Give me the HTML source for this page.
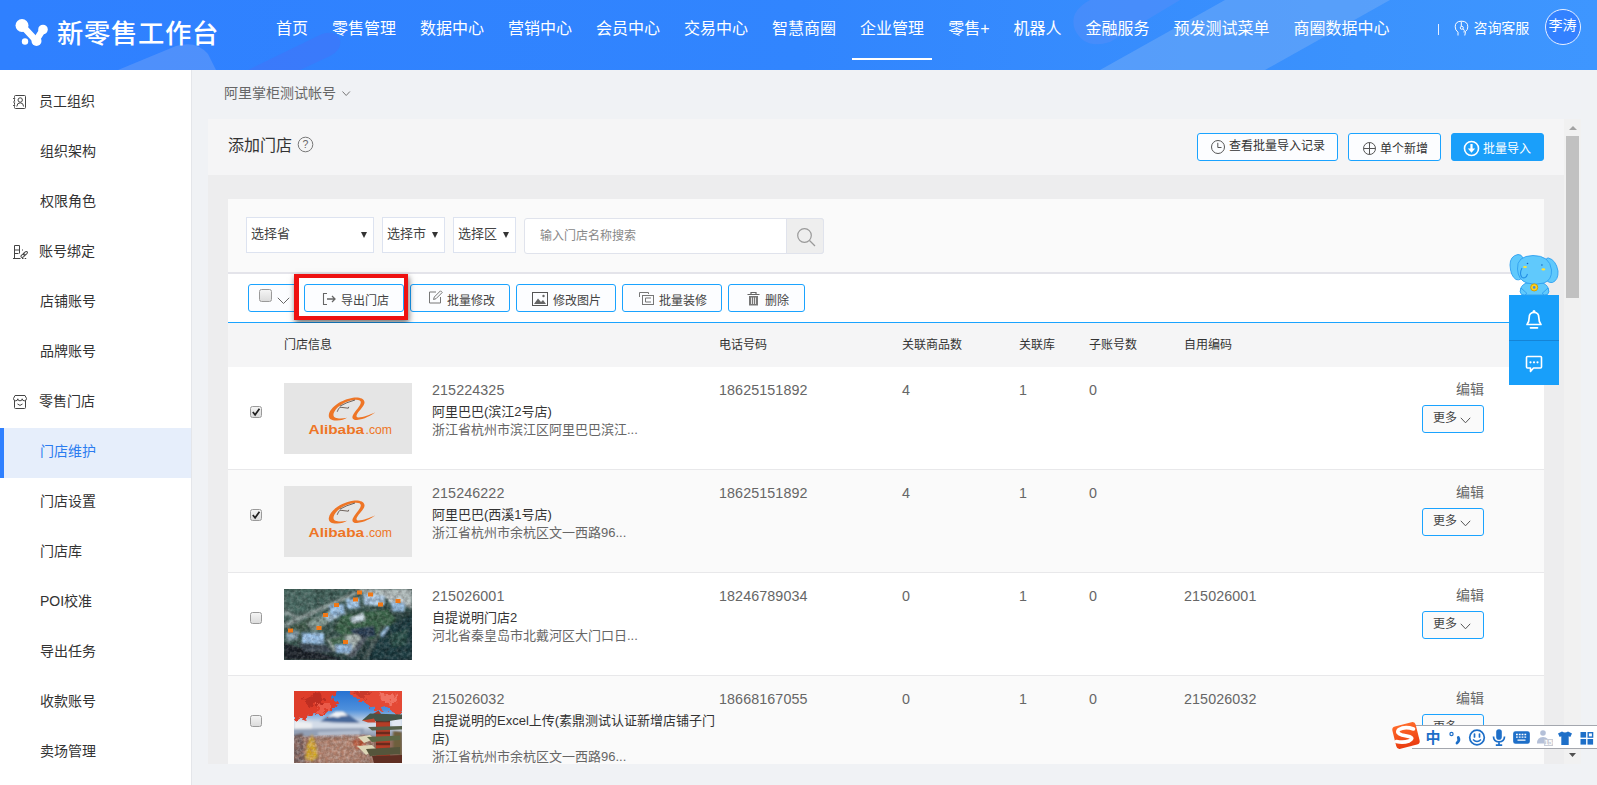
<!DOCTYPE html>
<html lang="zh-CN">
<head>
<meta charset="utf-8">
<title>新零售工作台</title>
<style>
*{box-sizing:border-box;margin:0;padding:0}
html,body{width:1597px;height:785px;overflow:hidden;background:#f0f2f5;font-family:"Liberation Sans","Noto Sans CJK SC",sans-serif;color:#333;font-size:14px}
.abs{position:absolute}
#hdr{position:absolute;left:0;top:0;width:1597px;height:70px;background:#2f80ff;overflow:hidden}
#hdr .title{position:absolute;left:57px;top:15px;font-size:26.300px;line-height:38px;color:#fff;font-weight:500;letter-spacing:.7px;white-space:nowrap}
#nav{position:absolute;left:264px;top:0;height:70px;white-space:nowrap;font-size:0}
#nav span{display:inline-block;padding:0 12px;font-size:16px;line-height:22px;color:#fff;margin-top:18px;height:22px}
#nav span.on:after{content:"";position:absolute;margin-left:-72px;top:58px;width:80px;height:2px;background:#fff}
#side{position:absolute;left:0;top:70px;width:192px;height:715px;background:#fff;border-right:1px solid #e4e6ea}
#side div{position:absolute;left:0;width:191px;height:50px;line-height:50px;font-size:14px;color:#333;padding-left:40px;white-space:nowrap}
#side div.g{padding-left:39px}
#side div.on{color:#2b7cf0}
#side i{position:absolute;left:0;top:358px;width:191px;height:50px;background:#e6eefb;border-left:4px solid #2f80ff}
#side svg{position:absolute;left:12px;top:18px}
.crumb{position:absolute;left:224px;top:83px;font-size:14px;line-height:20px;color:#666;white-space:nowrap}
#panel{position:absolute;left:208px;top:119px;width:1356px;height:645px;background:#ededee}
#phead{position:absolute;left:0;top:0;width:1356px;height:56px;background:#f5f5f6}
#card{position:absolute;left:20px;top:80px;width:1316px;height:565px;background:#fff;overflow:hidden}
.btn{position:absolute;border:1px solid #1aa3ff;border-radius:3px;background:#fcfdff;font-size:12px;color:#333;white-space:nowrap}

#card .filt{position:absolute;left:0;top:0;width:1316px;height:75px;background:#fafafa;border-bottom:2px solid #e4e4ea}
.sel{position:absolute;top:18px;height:36px;border:1px solid #dde3f0;background:#fff;font-size:13px;line-height:32px;color:#444;padding-left:4px;white-space:nowrap}
.sel:after{content:"";position:absolute;right:6px;top:14px;border:3.500px solid transparent;border-top:6px solid #333;border-bottom:0}
#tb{position:absolute;left:0;top:75px;width:1316px;height:49px;background:#fff;border-bottom:1px solid #1aa3ff}
#tb .btn{top:10px;height:28px;line-height:33px;width:100px;padding-left:36px;color:#444}
#tb .btn svg{position:absolute;left:17px;top:6px}
#th{position:absolute;left:0;top:124px;width:1316px;height:43px;background:#f5f5f6;font-size:12px;color:#333}
#th span{position:absolute;top:0;line-height:44px;white-space:nowrap}
.row{position:absolute;left:0;width:1316px;height:103px;border-top:1px solid #e8e8ea;background:#fff}
.row.alt{background:#fafafa}
.row .cb{position:absolute;left:22px;top:39px;width:12px;height:12px;border:1px solid #9a9a9a;border-radius:2.500px;background:linear-gradient(#f4f4f4,#dcdcdc)}
.row .num{position:absolute;top:14px;font-size:14.300px;line-height:18px;color:#666;white-space:nowrap;letter-spacing:.1px}
.row .nm{position:absolute;left:204px;top:36px;width:290px;font-size:13px;line-height:18px;color:#333}
.row .nm em{font-style:normal;color:#666;display:block;white-space:nowrap}
.row .ed{position:absolute;left:1200px;top:12px;width:56px;text-align:right;font-size:14px;line-height:20px;color:#666}
.row .more{position:absolute;left:1194px;top:38px;width:62px;height:28px;border:1px solid #1aa3ff;border-radius:3px;background:#fafafa;font-size:12px;line-height:25px;color:#444;padding-left:10px;white-space:nowrap}
.row .more svg{position:absolute;left:37px;top:11px}
.img{position:absolute;left:56px;top:16px;width:128px;height:71px;overflow:hidden}
</style>
</head>
<body>
<div id="hdr">
  <svg class="abs" style="left:0;top:0" width="1597" height="70" viewBox="0 0 1597 70">
    <defs><linearGradient id="hg" x1="0" x2="1" y1="0" y2="0"><stop offset="0" stop-color="#2f80ff"/><stop offset=".5" stop-color="#3185fe"/><stop offset=".85" stop-color="#3b92fd"/><stop offset="1" stop-color="#3e96ff"/></linearGradient></defs>
    <rect width="1597" height="70" fill="url(#hg)"/>
    <path d="M118 70 L176 46 Q196 40 208 54 L216 70 Z" fill="#5a96f9" opacity=".75"/>
    <path d="M248 70 L322 34 Q336 30 340 40 Q342 50 330 56 L300 70 Z" fill="#4a6ff5" opacity=".4"/>
    <path d="M1100 70 L1225 0 L1390 0 L1265 70 Z" fill="#6aa8f8" opacity=".6"/>
    <path d="M1075 30 Q1068 12 1090 0 L1180 0 L1110 42 Q1085 50 1075 30 Z" fill="#5a8df8" opacity=".45"/>
  </svg>
  <svg class="abs" style="left:15px;top:18px" width="34" height="30" viewBox="0 0 34 30">
    <g fill="none" stroke="#fff" stroke-width="6.5" stroke-linecap="round"><path d="M7.500 8 L21 22.500"/><path d="M21 22.500 L28 11.500"/></g>
    <circle cx="7" cy="7.500" r="6.500" fill="#fff"/><circle cx="28" cy="11.500" r="4.800" fill="#fff"/><circle cx="21.500" cy="23" r="5" fill="#fff"/><circle cx="10" cy="23.500" r="3.200" fill="#fff"/>
  </svg>
  <div class="title">新零售工作台</div>
  <div class="abs" style="left:1438px;top:24px;width:1px;height:11px;background:#e6eeff"></div>
  <svg class="abs" style="left:1454px;top:20px" width="15" height="16" viewBox="0 0 15 16"><g fill="none" stroke="#fff" stroke-width="1"><path d="M4 15.500 V12.200 Q1.200 10.300 1.200 6.800 Q1.200 1.200 7.500 1.200 Q13.800 1.200 13.800 6.800 Q13.800 10 11.500 11.500 L10.800 15.500"/><circle cx="7.800" cy="7.800" r="1.500"/><path d="M7.300 1.500 V6.300 M9.200 8.800 Q11 10.500 10 12.500"/></g></svg>
  <div class="abs" style="left:1473.500px;top:17px;font-size:14px;line-height:22px;color:#fff;white-space:nowrap;letter-spacing:-.1px">咨询客服</div>
  <div class="abs" style="left:1544.500px;top:9px;width:36px;height:36px;border-radius:50%;border:1px solid #e8f0ff;background:#3381ff;color:#fff;font-size:14px;line-height:31px;text-align:center;white-space:nowrap">李涛</div>
  <div id="nav"><span>首页</span><span>零售管理</span><span>数据中心</span><span>营销中心</span><span>会员中心</span><span>交易中心</span><span>智慧商圈</span><span class="on">企业管理</span><span>零售+</span><span>机器人</span><span>金融服务</span><span>预发测试菜单</span><span>商圈数据中心</span></div>
</div>
<div id="side">
  <div class="g" style="top:6px"><svg width="16" height="16" viewBox="0 0 16 16"><g fill="none" stroke="#444" stroke-width="1"><rect x="2.500" y="1.500" width="11" height="13" rx="1"/><circle cx="8.200" cy="6" r="2.200"/><path d="M4.800 12.500 Q5 8.800 8.200 8.800 Q11.400 8.800 11.600 12.500"/></g><path d="M1 4.500h2M1 8h2M1 11.500h2" stroke="#fff" stroke-width="1.600"/><path d="M1 4.500h2.200M1 8h2.200M1 11.500h2.200" stroke="#444" stroke-width=".9"/></svg>员工组织</div>
  <div style="top:56px">组织架构</div>
  <div style="top:106px">权限角色</div>
  <div class="g" style="top:156px"><svg width="17" height="16" viewBox="0 0 17 16"><g fill="none" stroke="#444" stroke-width="1"><path d="M2.500 14.500 V1.500 H7.500 V9.500"/><path d="M2.500 6 H7.500 M2.500 9.500 H6.500"/><path d="M1 14.500 H8.500"/><path d="M10 14.500 H15" stroke-dasharray="1.500 1.200"/><ellipse cx="11" cy="11.600" rx="2.300" ry="1.300" transform="rotate(-38 11 11.600)"/><ellipse cx="13.400" cy="9.300" rx="2.300" ry="1.300" transform="rotate(-38 13.400 9.300)"/><path d="M10.500 5.500 V7.500" stroke-dasharray="1 1"/></g></svg>账号绑定</div>
  <div style="top:206px">店铺账号</div>
  <div style="top:256px">品牌账号</div>
  <div class="g" style="top:306px"><svg width="16" height="16" viewBox="0 0 16 16"><g fill="none" stroke="#444" stroke-width="1"><path d="M2.500 6.500 V13.500 Q2.500 14.500 3.500 14.500 H12.500 Q13.500 14.500 13.500 13.500 V6.500"/><path d="M1.500 4.500 L3 1.500 H13 L14.500 4.500 Q14.500 6.800 12.300 6.800 Q10.200 6.800 10.200 4.800 Q10.200 6.800 8 6.800 Q5.800 6.800 5.800 4.800 Q5.800 6.800 3.700 6.800 Q1.500 6.800 1.500 4.500 Z"/><path d="M5.500 10 Q8 12.800 10.500 10"/></g></svg>零售门店</div>
  <i></i><div class="on" style="top:356px">门店维护</div>
  <div style="top:406px">门店设置</div>
  <div style="top:456px">门店库</div>
  <div style="top:506px">POI校准</div>
  <div style="top:556px">导出任务</div>
  <div style="top:606px">收款账号</div>
  <div style="top:656px">卖场管理</div>
</div>
<div class="crumb">阿里掌柜测试帐号<svg width="9" height="6" viewBox="0 0 9 6" style="position:absolute;left:118px;top:8px"><path d="M.5 .5 L4.200 4.500 L7.900 .5" fill="none" stroke="#777" stroke-width="1"/></svg></div>
<div id="panel">
  <div id="phead">
    <div class="abs" style="left:20px;top:15px;font-size:16px;line-height:24px;color:#333;white-space:nowrap">添加门店</div>
    <svg class="abs" style="left:89px;top:17px" width="17" height="17" viewBox="0 0 17 17"><circle cx="8.500" cy="8.500" r="7.300" fill="none" stroke="#777" stroke-width="1"/><text x="8.500" y="12.300" font-size="10.500" text-anchor="middle" fill="#666" font-family="Liberation Sans, sans-serif">?</text></svg>
    <div class="btn" style="left:989px;top:14px;width:141px;height:28px;line-height:24px;padding-left:31px"><svg class="abs" style="left:12px;top:5px" width="16" height="16" viewBox="0 0 16 16"><circle cx="8" cy="8" r="6.500" fill="none" stroke="#555" stroke-width="1"/><path d="M7.800 3.800 V8.500 H11.500" fill="none" stroke="#555" stroke-width="1"/></svg>查看批量导入记录</div>
    <div class="btn" style="left:1140px;top:14px;width:93px;height:28px;line-height:31px;padding-left:31px"><svg class="abs" style="left:13px;top:7px" width="15" height="15" viewBox="0 0 15 15"><circle cx="7.500" cy="7.500" r="6" fill="none" stroke="#555" stroke-width="1"/><path d="M7.500 1.500 V13.500 M1.500 7.500 H13.500" stroke="#555" stroke-width="1"/></svg>单个新增</div>
    <div class="btn" style="left:1243px;top:14px;width:93px;height:28px;line-height:31px;padding-left:31px;background:#1a9ffa;color:#fff;border-color:#1a9ffa"><svg class="abs" style="left:11px;top:6px" width="17" height="17" viewBox="0 0 17 17"><circle cx="8.500" cy="8.500" r="7" fill="none" stroke="#fff" stroke-width="1.600"/><path d="M8.500 4 V11" stroke="#fff" stroke-width="2.200"/><path d="M4.800 8.500 L8.500 12.800 L12.200 8.500 Z" fill="#fff"/></svg>批量导入</div>
  </div>
  <div id="card">
    <div class="filt">
      <div class="sel" style="left:18px;width:128px">选择省</div>
      <div class="sel" style="left:154px;width:63px">选择市</div>
      <div class="sel" style="left:225px;width:63px">选择区</div>
      <div class="abs" style="left:296px;top:19px;width:300px;height:36px;border:1px solid #e0e3ec;border-radius:3px;background:#fff"></div>
      <div class="abs" style="left:312px;top:19px;font-size:12px;line-height:36px;color:#888;white-space:nowrap">输入门店名称搜索</div>
      <div class="abs" style="left:558px;top:19px;width:38px;height:36px;border:1px solid #e0e3ec;border-radius:0 3px 3px 0;background:#eee"><svg class="abs" style="left:8px;top:7px" width="22" height="22" viewBox="0 0 22 22"><circle cx="9.500" cy="9.500" r="6.800" fill="none" stroke="#999" stroke-width="1.200"/><path d="M14.500 14.500 L20 20" stroke="#999" stroke-width="1.200"/></svg></div>
    </div>
    <div id="tb">
      <div class="btn" style="left:20px;width:50px;padding:0"><div class="abs" style="left:10px;top:4px;width:13px;height:13px;border:1px solid #9a9a9a;border-radius:2.500px;background:linear-gradient(#f4f4f4,#dcdcdc)"></div><svg style="left:28px;top:12px" width="13" height="8" viewBox="0 0 13 8"><path d="M.8 .8 L6.500 6.500 L12.200 .8" fill="none" stroke="#666" stroke-width="1"/></svg></div>
      <div class="btn" style="left:76px"><svg width="16" height="16" viewBox="0 0 16 16"><path d="M5 2.500 H1.500 V13.500 H5" fill="none" stroke="#666" stroke-width="1.100"/><path d="M5 8 H13 M10 5 L13 8 L10 11" fill="none" stroke="#666" stroke-width="1.300"/></svg>导出门店</div>
      <div class="btn" style="left:182px"><svg width="16" height="16" viewBox="0 0 16 16" style="top:4px"><path d="M12.500 8 V14 H1.500 V3 H8" fill="none" stroke="#777" stroke-width="1"/><path d="M5.500 10.500 L6.300 8 L12.500 1.800 L14.200 3.500 L8 9.700 Z" fill="none" stroke="#777" stroke-width="1"/></svg>批量修改</div>
      <div class="btn" style="left:288px"><svg width="16" height="14" viewBox="0 0 16 14" style="left:15px;top:7px"><rect x=".5" y=".5" width="15" height="13" fill="none" stroke="#555" stroke-width="1"/><path d="M2 12 L6 6.500 L9 10 L11 8 L14 12 Z" fill="#666"/><circle cx="11.500" cy="4" r="1.200" fill="#666"/></svg>修改图片</div>
      <div class="btn" style="left:394px"><svg width="15" height="13" viewBox="0 0 15 13" style="left:16px;top:7px"><path d="M.5 5 V.5 H9.500 V2" fill="none" stroke="#777" stroke-width="1"/><rect x="3.500" y="3.500" width="11" height="9" fill="none" stroke="#777" stroke-width="1"/><path d="M12 6 H6.500 V10 H12" fill="none" stroke="#777" stroke-width="1"/></svg>批量装修</div>
      <div class="btn" style="left:500px;width:77px"><svg width="13" height="14" viewBox="0 0 13 14" style="left:18px;top:7px"><path d="M.5 2.500 H12.500 M4 2 V.5 H9 V2" fill="none" stroke="#666" stroke-width="1.200"/><path d="M2 4 H11 V13.500 H2 Z" fill="#777"/><path d="M4.500 5.500 V12 M6.500 5.500 V12 M8.500 5.500 V12" stroke="#fff" stroke-width=".8"/></svg>删除</div>
      <div class="abs" style="left:66px;top:0px;width:114px;height:46px;border:4px solid #ee1111;border-width:4px 4px 4px 5px;box-shadow:1px 3px 6px rgba(0,0,0,.55)"></div>
    </div>
    <div id="th"><span style="left:56px">门店信息</span><span style="left:491px">电话号码</span><span style="left:674px">关联商品数</span><span style="left:791px">关联库</span><span style="left:861px">子账号数</span><span style="left:956px">自用编码</span></div>
<div class="row" style="top:167px;border-top-color:#f5f5f6"><div class="cb"><svg width="10" height="10" viewBox="0 0 11 11" style="position:absolute;left:0;top:0"><path d="M2 5.500 L4.500 8.500 L9.300 1.800" fill="none" stroke="#222" stroke-width="1.900"/></svg></div><div class="img" style="background:#e5e5e5"><svg width="128" height="71" viewBox="0 0 128 71"><path d="M80.500 19 C80 15.500 75 14 69 14.800 C58 16.500 46 24 44.800 32 C44.300 36 48 37.800 53 37.600 C57 37.400 61 36.300 63 34.800 C59 35.600 54 35.800 51.500 34.800 C49 33.600 49 31 50.500 28.500 C54 22.500 62 18 69.500 17 C74 16.400 77 17.200 76.800 19.500 C76.500 23 71 28 68.800 32.500 C67.500 35.500 69.500 37.200 73 37 C80 36.500 87 32.500 91.500 29.300 C86 31.800 79 34.500 74.500 34.500 C72.300 34.400 72 33 73 31.200 C75.500 27 81 22.500 80.500 19 Z" fill="#ee7526"/><path d="M53.200 28.800 Q54.300 25.600 56 24.200 L64.300 25.200 L64.800 23.800 M55.800 23.200 Q62 19.500 71 17" stroke="#3c2c24" stroke-width=".7" fill="none"/><text x="24.600" y="50.800" font-family="Liberation Sans, sans-serif" font-size="12.500" font-weight="bold" fill="#ee7526" textLength="55.500" lengthAdjust="spacingAndGlyphs">Alibaba</text><text x="81.500" y="50.800" font-family="Liberation Sans, sans-serif" font-size="12" fill="#ee7526" textLength="26.500" lengthAdjust="spacingAndGlyphs">.com</text></svg></div>
      <div class="num" style="left:204px">215224325</div>
      <div class="nm">阿里巴巴(滨江2号店)<em>浙江省杭州市滨江区阿里巴巴滨江...</em></div>
      <div class="num" style="left:491px">18625151892</div>
      <div class="num" style="left:674px">4</div><div class="num" style="left:791px">1</div><div class="num" style="left:861px">0</div><div class="num" style="left:956px"></div>
      <div class="ed">编辑</div><div class="more">更多<svg width="11" height="7" viewBox="0 0 11 7"><path d="M.8 .8 L5.500 5.800 L10.200 .8" fill="none" stroke="#555" stroke-width="1"/></svg></div>
    </div><div class="row alt" style="top:270px"><div class="cb"><svg width="10" height="10" viewBox="0 0 11 11" style="position:absolute;left:0;top:0"><path d="M2 5.500 L4.500 8.500 L9.300 1.800" fill="none" stroke="#222" stroke-width="1.900"/></svg></div><div class="img" style="background:#e5e5e5"><svg width="128" height="71" viewBox="0 0 128 71"><path d="M80.500 19 C80 15.500 75 14 69 14.800 C58 16.500 46 24 44.800 32 C44.300 36 48 37.800 53 37.600 C57 37.400 61 36.300 63 34.800 C59 35.600 54 35.800 51.500 34.800 C49 33.600 49 31 50.500 28.500 C54 22.500 62 18 69.500 17 C74 16.400 77 17.200 76.800 19.500 C76.500 23 71 28 68.800 32.500 C67.500 35.500 69.500 37.200 73 37 C80 36.500 87 32.500 91.500 29.300 C86 31.800 79 34.500 74.500 34.500 C72.300 34.400 72 33 73 31.200 C75.500 27 81 22.500 80.500 19 Z" fill="#ee7526"/><path d="M53.200 28.800 Q54.300 25.600 56 24.200 L64.300 25.200 L64.800 23.800 M55.800 23.200 Q62 19.500 71 17" stroke="#3c2c24" stroke-width=".7" fill="none"/><text x="24.600" y="50.800" font-family="Liberation Sans, sans-serif" font-size="12.500" font-weight="bold" fill="#ee7526" textLength="55.500" lengthAdjust="spacingAndGlyphs">Alibaba</text><text x="81.500" y="50.800" font-family="Liberation Sans, sans-serif" font-size="12" fill="#ee7526" textLength="26.500" lengthAdjust="spacingAndGlyphs">.com</text></svg></div>
      <div class="num" style="left:204px">215246222</div>
      <div class="nm">阿里巴巴(西溪1号店)<em>浙江省杭州市余杭区文一西路96...</em></div>
      <div class="num" style="left:491px">18625151892</div>
      <div class="num" style="left:674px">4</div><div class="num" style="left:791px">1</div><div class="num" style="left:861px">0</div><div class="num" style="left:956px"></div>
      <div class="ed">编辑</div><div class="more">更多<svg width="11" height="7" viewBox="0 0 11 7"><path d="M.8 .8 L5.500 5.800 L10.200 .8" fill="none" stroke="#555" stroke-width="1"/></svg></div>
    </div><div class="row" style="top:373px"><div class="cb"></div><div class="img" id="im3"><svg width="128" height="71" viewBox="0 0 128 71">
<defs><filter id="b1" x="-10%" y="-10%" width="120%" height="120%"><feGaussianBlur stdDeviation="1.100"/></filter><filter id="b2"><feGaussianBlur stdDeviation=".6"/></filter>
<filter id="nz" x="0" y="0" width="100%" height="100%"><feTurbulence type="fractalNoise" baseFrequency=".22" numOctaves="3" seed="7" result="t"/><feColorMatrix type="matrix" values="0 0 0 0 0  0 0 0 0 0  0 0 0 0 0  1.600 0 0 0 -.55"/></filter>
<filter id="nw" x="0" y="0" width="100%" height="100%"><feTurbulence type="fractalNoise" baseFrequency=".3" numOctaves="2" seed="3"/><feColorMatrix type="matrix" values="0 0 0 0 1  0 0 0 0 1  0 0 0 0 1  0 1.600 0 0 -.62"/></filter>
<linearGradient id="g3" x1="0" y1="0" x2="1" y2="1"><stop offset="0" stop-color="#4a6862"/><stop offset=".45" stop-color="#3a5650"/><stop offset="1" stop-color="#15272c"/></linearGradient></defs>
<rect width="128" height="71" fill="url(#g3)"/>
<g filter="url(#b1)">
<path d="M72 0 L128 0 L128 20 L104 10 L84 6 Z" fill="#b4bfbf"/>
<path d="M0 0 L70 0 L0 30 Z" fill="#4a6a64"/>
<path d="M30 0 L66 0 L30 14 Z" fill="#3f5e58"/>
<path d="M0 34 L72 2 L75 4.500 L0 39 Z" fill="#8c9c9a"/>
<path d="M0 20 L14 27 L12 30 L0 25 Z" fill="#7f908e"/>
<path d="M0 40 L26 29 L40 30 L10 48 Z" fill="#3f5a4c"/>
<path d="M98 40 L128 26 L128 71 L84 71 Z" fill="#1c3a3f"/>
<path d="M104 46 L124 40 L122 56 L108 58 Z" fill="#2c5048"/>
<path d="M0 54 L62 71 L0 71 Z" fill="#1b232b"/>
<path d="M58 26 L104 20 L112 30 L94 50 L66 52 L50 40 Z" fill="#3a6449"/>
<path d="M66 40 L90 37 L92 47 L72 51 Z" fill="#2b3d52"/>
<path d="M22 34 L48 20 L56 26 L30 44 Z" fill="#7f968f"/>
<path d="M40 28 L52 22 L56 27 L46 33 Z" fill="#a9c4d8"/>
<path d="M45 17 L60 15 L61 25 L47 27 Z" fill="#9cc4ea"/>
<path d="M62 10 L75 9 L76 19 L63 20 Z" fill="#a5cbee"/>
<path d="M79 5 L101 7 L100 17 L80 16 Z" fill="#b4d2ee"/>
<path d="M104 6 L122 10 L120 16 L104 13 Z" fill="#c5cfd2"/>
<path d="M107 13 L121 14 L120 23 L108 22 Z" fill="#9cc4ea"/>
<path d="M66 29 L79 24 L81 31 L69 34 Z" fill="#ccdce6"/>
<path d="M18 44 L40 44 L40 55 L18 54 Z" fill="#9ec6ee"/>
<path d="M2 44 L14 42 L14 50 L3 52 Z" fill="#8fa9b8"/>
<path d="M14 54 L42 56 L50 64 L20 62 Z" fill="#3b4652"/>
<path d="M42 50 L72 45 L80 50 L64 66 L50 62 Z" fill="#aab7b4"/>
<path d="M44 50 L60 47 L64 55 L50 58 Z" fill="#4a6e56"/>
<path d="M51 56 L68 55 L67 64 L52 64 Z" fill="#98c0e8"/>
<path d="M76 50 L86 46 L70 68 L62 68 Z" fill="#56606a"/>
<path d="M96 46 L103 37 L105 38 L99 48 Z" fill="#9cc0e4"/>
<path d="M84 60 L89 54 L91 55 L86 62 Z" fill="#8fb4d8"/>
<path d="M90 50 L99 36 L101 37 L82 71 L78 71 Z" fill="#4a5a58"/>
</g>
<rect width="128" height="71" filter="url(#nz)" opacity=".42"/>
<rect width="128" height="71" filter="url(#nw)" opacity=".26"/>
<g fill="#f07818" filter="url(#b2)"><rect x="73" y="1.500" width="5" height="4"/><rect x="84" y="3.500" width="5" height="4"/><rect x="69" y="8.500" width="5" height="4"/><rect x="50" y="14" width="5" height="4"/><rect x="39" y="24" width="5" height="4"/><rect x="111.500" y="10" width="5" height="4"/><rect x="94" y="13.500" width="5" height="4"/><rect x="32.500" y="37" width="5" height="4"/><rect x="4" y="39.500" width="5" height="4"/><rect x="59" y="51" width="5" height="4"/></g>
</svg></div>
      <div class="num" style="left:204px">215026001</div>
      <div class="nm">自提说明门店2<em>河北省秦皇岛市北戴河区大门口日...</em></div>
      <div class="num" style="left:491px">18246789034</div>
      <div class="num" style="left:674px">0</div><div class="num" style="left:791px">1</div><div class="num" style="left:861px">0</div><div class="num" style="left:956px">215026001</div>
      <div class="ed">编辑</div><div class="more">更多<svg width="11" height="7" viewBox="0 0 11 7"><path d="M.8 .8 L5.500 5.800 L10.200 .8" fill="none" stroke="#555" stroke-width="1"/></svg></div>
    </div><div class="row alt" style="top:476px"><div class="cb"></div><div class="img" id="im4" style="left:66px;top:15px;width:108px;height:72px"><svg width="108" height="72" viewBox="0 0 108 72">
<defs><filter id="c1" x="-10%" y="-10%" width="120%" height="120%"><feGaussianBlur stdDeviation=".9"/></filter><filter id="c2"><feGaussianBlur stdDeviation=".45"/></filter>
<filter id="lf" x="-10%" y="-10%" width="120%" height="120%"><feTurbulence type="fractalNoise" baseFrequency=".2" numOctaves="3" seed="11" result="t"/><feDisplacementMap in="SourceGraphic" in2="t" scale="12" xChannelSelector="R" yChannelSelector="G"/><feGaussianBlur stdDeviation=".45"/></filter>
<filter id="n4" x="0" y="0" width="100%" height="100%"><feTurbulence type="fractalNoise" baseFrequency=".3" numOctaves="3" seed="5"/><feColorMatrix type="matrix" values="0 0 0 0 .2  0 0 0 0 .12  0 0 0 0 .1  1.800 0 0 0 -.62"/></filter>
<filter id="n5" x="0" y="0" width="100%" height="100%"><feTurbulence type="fractalNoise" baseFrequency=".32" numOctaves="2" seed="9"/><feColorMatrix type="matrix" values="0 0 0 0 .95  0 0 0 0 .88  0 0 0 0 .86  0 1.800 0 0 -.66"/></filter>
<filter id="n6" x="0" y="0" width="100%" height="100%"><feTurbulence type="fractalNoise" baseFrequency=".25" numOctaves="2" seed="21"/><feColorMatrix type="matrix" values="0 0 0 0 .85  0 0 0 0 .28  0 0 0 0 .16  0 0 1.900 0 -.78"/></filter>
<linearGradient id="sky" x1="0" y1="0" x2="0" y2="1"><stop offset="0" stop-color="#2672d2"/><stop offset=".26" stop-color="#4e90dc"/><stop offset=".4" stop-color="#b6cae2"/><stop offset=".5" stop-color="#bcc8d8"/><stop offset=".6" stop-color="#97a3b8"/><stop offset="1" stop-color="#8a6a5e"/></linearGradient>
<clipPath id="fg"><path d="M0 45 L70 43 L80 50 L80 72 L0 72 Z"/></clipPath></defs>
<rect width="108" height="72" fill="url(#sky)"/>
<g filter="url(#c1)">
<path d="M24 32 L39 22 L42 20.500 L49 20.500 L52 22 L66 32 Z" fill="#466799"/>
<path d="M33 26.500 L40 21.500 L42 20.500 L49 20.500 L54 24.500 L47 25 L44 26.500 L39 25.500 Z" fill="#f1f4f8"/>
<path d="M0 27 L20 30 L40 31.500 L70 32.500 L88 30 L88 37 L0 38 Z" fill="#d3dce8"/>
<path d="M0 30 L18 32 L18 38 L0 38 Z" fill="#eef0f2"/>
<path d="M0 38 L70 37 L70 46 L0 46 Z" fill="#93a0b6"/>
<path d="M24 41 L66 39.500 L66 45 L24 46 Z" fill="#b3bdce"/>
<path d="M0 46 L70 44 L108 50 L108 72 L0 72 Z" fill="#8e6a5c"/>
<path d="M24 50 L64 47 L66 70 L26 72 Z" fill="#a57a68"/>
<path d="M0 44 L9 42 L11 72 L0 72 Z" fill="#6a5654"/>
<path d="M11 68 L13 54 L18 43 L22 54 L24 66 L18 70 Z" fill="#cfa51e"/>
<path d="M96 28 L108 22 L108 40 L98 38 Z" fill="#e2e8f2"/>
<path d="M99 40 L108 40 L108 66 L99 60 Z" fill="#6e5e3c"/>
<path d="M58 50 L70 46 L72 56 L62 58 Z" fill="#b0482c"/>
</g>
<g filter="url(#lf)">
<path d="M-8 -8 L46 -8 L40 5 L42 15 L32 24 L19 22 L8 29 L-8 27 Z" fill="#de3e2c"/>
<path d="M10 6 L26 2 L30 12 L14 16 Z" fill="#bd2d20"/>
<path d="M22 14 L36 10 L36 20 L26 22 Z" fill="#ea5a48"/>
<path d="M54 -8 L116 -8 L116 16 L103 24 L92 17 L82 20 L72 11 L60 8 Z" fill="#e44a36"/>
<path d="M86 2 L104 4 L100 14 L88 10 Z" fill="#f07262"/>
<path d="M60 0 L74 0 L72 8 L64 6 Z" fill="#c8382a"/>
</g>
<g clip-path="url(#fg)"><rect width="108" height="72" filter="url(#n4)" opacity=".5"/><rect width="108" height="72" filter="url(#n5)" opacity=".45"/><rect width="108" height="72" filter="url(#n6)" opacity=".3"/></g>
<g filter="url(#c2)">
<rect x="82" y="27" width="14" height="45" fill="#b53c28"/>
<path d="M82 30 h14 M82 42 h14 M82 53 h14" stroke="#6a2a1e" stroke-width="2.500"/>
<path d="M79 23 L84.500 19.500 L87 23 Z" fill="#a83828"/>
<path d="M68 29.500 L76 22.500 L108 23.500 L108 28 L92 30.500 Z" fill="#445448"/>
<path d="M68 29.500 L80 27.500 L82 31.500 L74 31.500 Z" fill="#c84a30"/>
<path d="M74 36 L108 35 L108 38.500 L78 39.500 Z" fill="#55604a"/>
<path d="M64 46 L76 44 L80 48 L70 52 Z" fill="#ddd6b8"/>
<path d="M73 46 L106 44.500 L106 49 L78 51 Z" fill="#5d6844"/>
<path d="M63 55 L78 54 L82 58 L72 64 Z" fill="#dcd6b6"/>
<path d="M72 58 L106 56 L106 63 L76 65 Z" fill="#55553a"/>
<path d="M78 65 L108 64 L108 72 L80 72 Z" fill="#5e2e22"/>
</g>
</svg></div>
      <div class="num" style="left:204px">215026032</div>
      <div class="nm">自提说明的Excel上传(素鼎测试认证新增店铺子门店)<em>浙江省杭州市余杭区文一西路96...</em></div>
      <div class="num" style="left:491px">18668167055</div>
      <div class="num" style="left:674px">0</div><div class="num" style="left:791px">1</div><div class="num" style="left:861px">0</div><div class="num" style="left:956px">215026032</div>
      <div class="ed">编辑</div><div class="more">更多<svg width="11" height="7" viewBox="0 0 11 7"><path d="M.8 .8 L5.500 5.800 L10.200 .8" fill="none" stroke="#555" stroke-width="1"/></svg></div>
    </div>
  </div>
</div>

<!-- scrollbar -->
<div class="abs" style="left:1564px;top:119px;width:17px;height:645px;background:#f1f1f1"></div>
<div class="abs" style="left:1566px;top:136px;width:13px;height:162px;background:#c1c1c1"></div>
<svg class="abs" style="left:1568.500px;top:126px" width="8" height="4" viewBox="0 0 8 4"><path d="M0 4 L4 0 L8 4 Z" fill="#a3a3a3"/></svg>
<svg class="abs" style="left:1569px;top:753px" width="7" height="4" viewBox="0 0 7 4"><path d="M0 0 L3.500 4 L7 0 Z" fill="#505050"/></svg>
<!-- floating helper -->
<div class="abs" style="left:1509px;top:295px;width:50px;height:90px;background:#189ffa"></div>
<div class="abs" style="left:1509px;top:340px;width:50px;height:1px;background:#1584d6"></div>
<svg class="abs" style="left:1525px;top:309px" width="18" height="21" viewBox="0 0 18 21"><path d="M2 15.500 Q4.200 13 4.200 8.500 Q4.200 3.500 9 3.500 Q13.800 3.500 13.800 8.500 Q13.800 13 16 15.500 Z" fill="none" stroke="#fff" stroke-width="1.700" stroke-linejoin="round"/><circle cx="9" cy="2.600" r="1.500" fill="#fff"/><path d="M5.500 18.800 H12.500" stroke="#fff" stroke-width="1.700" stroke-linecap="round"/></svg>
<svg class="abs" style="left:1525px;top:355px" width="18" height="19" viewBox="0 0 18 19"><path d="M2.500 1.500 H15.500 Q16.500 1.500 16.500 2.500 V12 Q16.500 13 15.500 13 H8.500 L5.500 16.500 V13 H2.500 Q1.500 13 1.500 12 V2.500 Q1.500 1.500 2.500 1.500 Z" fill="none" stroke="#fff" stroke-width="1.600" stroke-linejoin="round"/><circle cx="5.500" cy="7.300" r="1.100" fill="#fff"/><circle cx="9" cy="7.300" r="1.100" fill="#fff"/><circle cx="12.500" cy="7.300" r="1.100" fill="#fff"/></svg>
<svg class="abs" style="left:1508px;top:252px" width="52" height="45" viewBox="0 0 52 45">
  <g stroke="#2e9ff0" stroke-width=".9" fill="#60c9fc">
    <path d="M18 31 Q12 34 12.500 39 Q14 43.500 19.500 43 L33 43 Q39 43.500 40.500 39 Q41 34 35 31 Z"/>
    <path d="M13 36 Q11 40 13.500 42.500 Q17 44 19 41.500 Z M40 36 Q42 40 39.500 42.500 Q36 44 34 41.500 Z"/>
    <path d="M10 2.500 Q2 4 2 13 Q2.500 24 8 27.500 Q13 29 15 24 Q12 14 15 6 Q13.500 2.200 10 2.500 Z"/>
    <path d="M40.500 6 Q48 8 50 19 Q50.500 28 44.500 30.500 Q39 31 37.500 26 Q41 16 38 8 Q38.500 5.500 40.500 6 Z"/>
    <path d="M9.500 17 Q8.500 4 25 3.500 Q42 3.500 43.500 18 Q44 28 36 31 Q27 33.500 19 31 Q10 28 9.500 17 Z"/>
    <path d="M14 16 Q11 22 14 25.500 Q18 27 19.500 22" fill="none" stroke="#2490e6" stroke-width="1.100"/>
  </g>
  <ellipse cx="17" cy="15" rx="2" ry="1.100" fill="#ffe23a"/><ellipse cx="35.400" cy="17.400" rx="2" ry="1.100" fill="#ffe23a"/>
  <circle cx="19.500" cy="11.500" r=".8" fill="#1565c0"/><circle cx="33.900" cy="13" r=".8" fill="#1565c0"/>
  <circle cx="26.200" cy="35.400" r="3.600" fill="#ffd21e" stroke="#c89600" stroke-width=".8"/><circle cx="26.200" cy="35.400" r="1.300" fill="#3a8ee6"/>
</svg>
<!-- ime bar -->
<div class="abs" style="left:1412px;top:725px;width:185px;height:24px;background:#fff;border-top:1px solid #a4a7ae;border-bottom:1px solid #a4a7ae"></div>
<svg class="abs" style="left:1390px;top:720px" width="32" height="31" viewBox="0 0 32 31">
  <defs><linearGradient id="sg" x1="0" y1="0" x2="0" y2="1"><stop offset="0" stop-color="#ff6a2a"/><stop offset="1" stop-color="#ea3c10"/></linearGradient></defs>
  <rect x="4" y="4" width="24" height="23" rx="3.500" fill="url(#sg)" transform="rotate(-14 16 15.500)"/>
  <path d="M23.500 9 Q15 6 9 9.500 Q5.500 13 12 15 L20 16.800 Q24 18.500 19 21 Q13 23 6.500 21.500" fill="none" stroke="#fff" stroke-width="3.600" stroke-linecap="round"/>
</svg>
<div class="abs" style="left:1425.500px;top:728px;font-size:15px;line-height:20px;font-weight:bold;color:#1e6fc8">中</div>
<svg class="abs" style="left:1447px;top:727px" width="150" height="22" viewBox="0 0 150 22">
  <g fill="none" stroke="#1e6fc8" stroke-width="1.700">
    <circle cx="4.500" cy="7" r="1.600" stroke-width="1.200"/>
    <path d="M11.300 10.500 Q13 13.500 10 16" stroke-width="2.800" stroke-linecap="round"/>
    <circle cx="30" cy="10.500" r="7.300"/>
    <path d="M27.500 7 V10 M32.500 7 V10" stroke-linecap="round"/><path d="M26 12.500 Q30 16.500 34 12.500" stroke-width="1.400"/>
    <path d="M46.500 9.500 Q46.500 14.800 52 14.800 Q57.500 14.800 57.500 9.500 M52 14.800 V18 M48.800 18.200 H55.200"/>
    <rect x="67" y="5" width="15" height="11" rx="1.500"/>
  </g>
  <rect x="49.200" y="2.200" width="5.600" height="10.500" rx="2.800" fill="#1e6fc8"/>
  <rect x="67" y="5" width="15" height="11" rx="1.500" fill="#1e6fc8"/>
  <path d="M69 7.500h1.800m1 0h1.800m1 0h1.800m1 0h1.800M69 10.200h1.800m1 0h1.800m1 0h1.800m1 0h1.800M70.500 13.200h8" stroke="#fff" stroke-width="1.300" fill="none"/>
  <circle cx="96" cy="6" r="2.800" fill="#b4c0d8"/><path d="M90 16.500 Q90 10 96 10 Q102 10 102 16.500 Z" fill="#b4c0d8"/>
  <rect x="97" y="12" width="9" height="7" fill="#c8ccd6"/><text x="97.500" y="18.300" font-size="7" font-weight="bold" fill="#fff" font-family="Liberation Sans, sans-serif">15</text>
  <path d="M111 6.500 L115 4.500 Q118 6.500 121 4.500 L125 6.500 L123.300 10 L121.700 9.300 V18 H114.300 V9.300 L112.700 10 Z" fill="#1e6fc8"/>
  <g fill="#1e6fc8"><rect x="133.500" y="5" width="5.600" height="5.600"/><rect x="133.500" y="12" width="5.600" height="5.600"/><rect x="140.500" y="12" width="5.600" height="5.600"/></g><rect x="141.200" y="5.700" width="4.400" height="4.400" fill="none" stroke="#1e6fc8" stroke-width="1.400"/>
</svg>
</body>
</html>
